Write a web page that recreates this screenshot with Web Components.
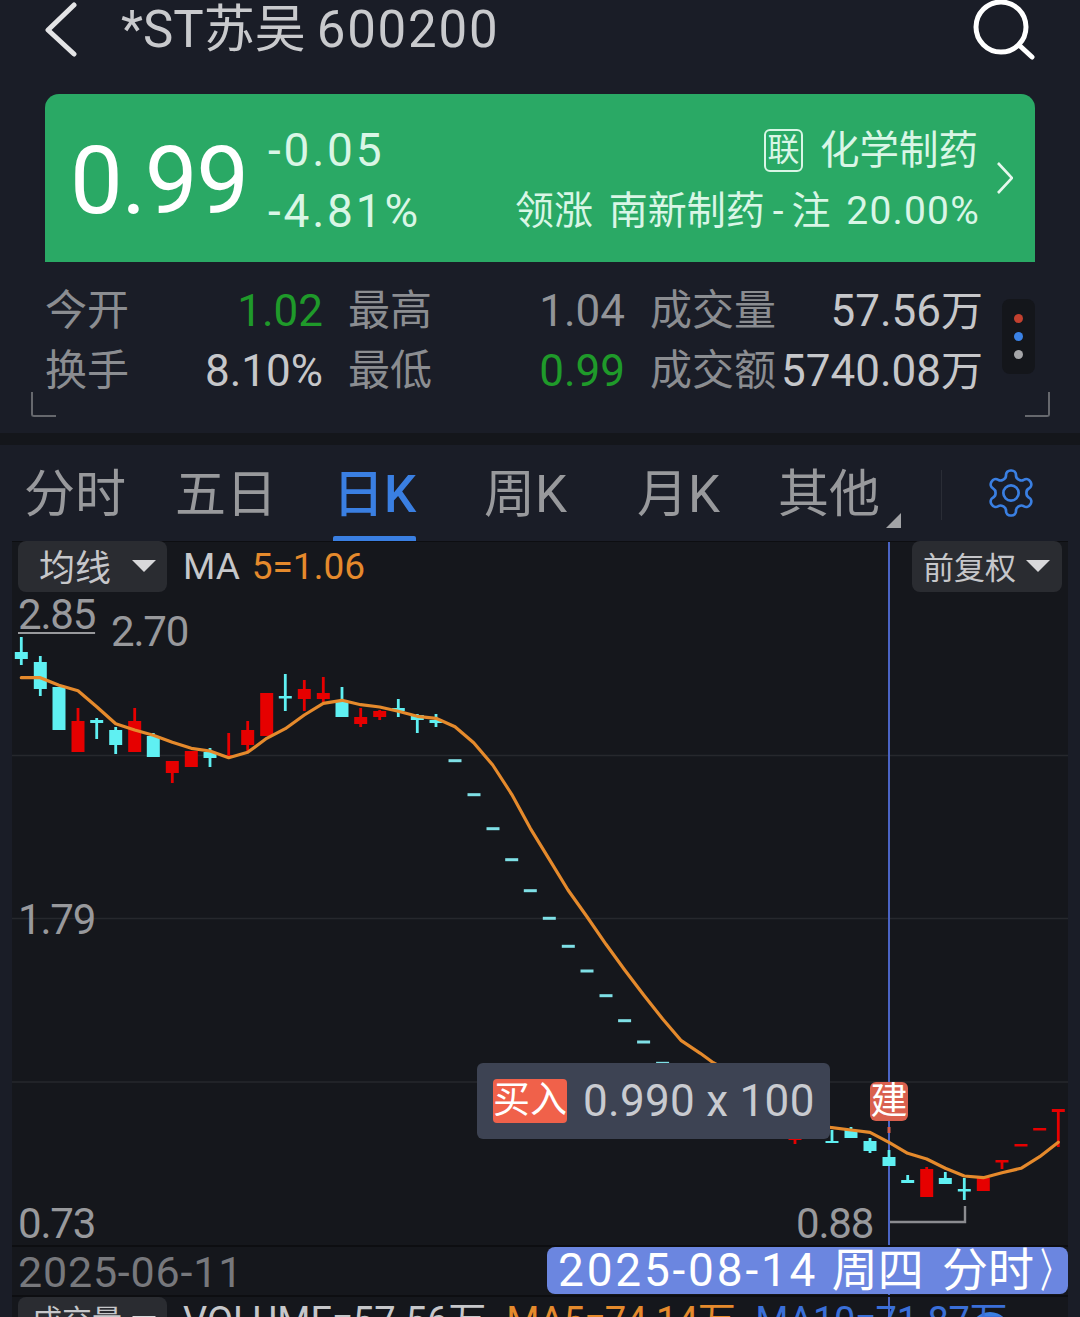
<!DOCTYPE html>
<html lang="zh">
<head>
<meta charset="utf-8">
<title>*ST苏吴 600200</title>
<style>
    html, body {
        margin: 0;
        height: 1317px;
        overflow: hidden;
        background: #1a1d27;
        font-family: Roboto, "Noto Sans CJK SC", sans-serif;
    }
</style>
</head>
<body>
<stock-header></stock-header>
<quote-card></quote-card>
<stat-grid></stat-grid>
<period-tabs></period-tabs>
<kline-chart></kline-chart>

<script>
class StockHeader extends HTMLElement {
    constructor() {
        super();
        this.shadow = this.attachShadow({ mode: "open" });
        this.shadow.innerHTML = `
            <style>
                :host { display: flex; height: 94px; box-sizing: border-box; padding: 0 45px; align-items: flex-start; }
                .back { width: 32px; height: 58px; flex: none; }
                .title {
                    flex: 1;
                    margin-left: 44px;
                    height: 60px;
                    line-height: 60px;
                    font-size: 51px;
                    color: #c9cacd;
                    white-space: nowrap;
                }
                .code { letter-spacing: 1.8px; margin-left: 11px; }
                .search { width: 62px; height: 60px; flex: none; }
            </style>
            <svg class="back" viewBox="0 0 32 58">
                <polyline points="29,5 3,30 29,54" fill="none" stroke="#e4e4e6" stroke-width="5" stroke-linecap="round" stroke-linejoin="round"/>
            </svg>
            <div class="title">*ST苏吴<span class="code">600200</span></div>
            <svg class="search" viewBox="0 0 62 60">
                <circle cx="28" cy="27" r="25" fill="none" stroke="#fff" stroke-width="5"/>
                <line x1="46" y1="45" x2="59" y2="57" stroke="#fff" stroke-width="5" stroke-linecap="round"/>
            </svg>
        `;
    }
}

class QuoteCard extends HTMLElement {
    constructor() {
        super();
        this.shadow = this.attachShadow({ mode: "open" });
        this.shadow.innerHTML = `
            <style>
                :host {
                    display: flex;
                    height: 168px;
                    margin: 0 45px;
                    box-sizing: border-box;
                    padding: 5px 0 0 25px;
                    background: #2aa965;
                    border-radius: 14px 14px 0 0;
                    align-items: center;
                    color: #d9f6e6;
                }
                .price { font-size: 94px; line-height: 1; color: #fff; width: 198px; flex: none; letter-spacing: -1.4px; }
                .diff { display: flex; flex-direction: column; font-size: 46px; line-height: 61px; letter-spacing: 2.8px; width: 230px; flex: none; }
                .right { flex: 1; display: flex; flex-direction: column; align-items: flex-end; line-height: 61px; font-size: 39px; white-space: nowrap; }
                .sector { display: flex; align-items: center; font-size: 39.5px; margin-right: 2px; }
                .tag {
                    width: 39px;
                    height: 43px;
                    box-sizing: border-box;
                    border: 2px solid #d9f6e6;
                    border-radius: 6px;
                    font-size: 32px;
                    line-height: 39px;
                    text-align: center;
                    margin-right: 17px;
                }
                .lead { word-spacing: 6px; }
                .lead .h { letter-spacing: 8px; margin-left: 8px; }
                .lead .n { letter-spacing: 1.2px; }
                .chev { width: 16px; height: 32px; margin: -5px 22px 0 17px; flex: none; }
            </style>
            <div class="price">0.99</div>
            <div class="diff"><span>-0.05</span><span>-4.81%</span></div>
            <div class="right">
                <div class="sector"><span class="tag">联</span>化学制药</div>
                <div class="lead">领涨 南新制药<span class="h">-</span>注 <span class="n">20.00%</span></div>
            </div>
            <svg class="chev" viewBox="0 0 16 32">
                <polyline points="1,1 15,16 1,31" fill="none" stroke="#e6f8ee" stroke-width="2.6"/>
            </svg>
        `;
    }
}

class StatGrid extends HTMLElement {
    constructor() {
        super();
        this.shadow = this.attachShadow({ mode: "open" });
        this.shadow.innerHTML = `
            <style>
                :host {
                    display: block;
                    position: relative;
                    height: 171px;
                    box-sizing: border-box;
                    padding: 19px 0 0 45px;
                    font-size: 42px;
                    color: #c6c7ca;
                }
                .grid {
                    display: grid;
                    grid-template-columns: 120px 158px 25px 82px 195px 25px 124px 209px;
                    grid-auto-rows: 60px;
                    line-height: 60px;
                    white-space: nowrap;
                }
                .lb { color: #8b8d91; }
                .val { text-align: right; font-size: 44px; }
                .green { color: #1f9a2a; }
                .dim { color: #929498; }
                .wan { font-size: 42px; }
                .dots {
                    position: absolute;
                    left: 1002px;
                    top: 37px;
                    width: 33px;
                    height: 75px;
                    background: #14161b;
                    border-radius: 8px;
                    display: flex;
                    flex-direction: column;
                    align-items: center;
                    justify-content: center;
                    gap: 9px;
                }
                .dots i { width: 9px; height: 9px; border-radius: 50%; }
                .corner { position: absolute; top: 130px; width: 25px; height: 25px; box-sizing: border-box; border-bottom: 2px solid #66686d; }
                .corner.l { left: 31px; border-left: 2px solid #66686d; border-bottom-left-radius: 3px; }
                .corner.r { left: 1025px; border-right: 2px solid #66686d; border-bottom-right-radius: 3px; }
            </style>
            <div class="grid">
                <span class="lb">今开</span><span class="val green">1.02</span><span></span>
                <span class="lb">最高</span><span class="val dim">1.04</span><span></span>
                <span class="lb">成交量</span><span class="val">57.56<span class="wan">万</span></span>
                <span class="lb">换手</span><span class="val">8.10%</span><span></span>
                <span class="lb">最低</span><span class="val green">0.99</span><span></span>
                <span class="lb">成交额</span><span class="val">5740.08<span class="wan">万</span></span>
            </div>
            <div class="dots">
                <i style="background:#c2402f"></i>
                <i style="background:#3b82e6"></i>
                <i style="background:#a5a6a9"></i>
            </div>
            <div class="corner l"></div>
            <div class="corner r"></div>
        `;
    }
}

class PeriodTabs extends HTMLElement {
    constructor() {
        super();
        this.shadow = this.attachShadow({ mode: "open" });
        this.shadow.innerHTML = `
            <style>
                :host {
                    display: flex;
                    position: relative;
                    height: 108px;
                    box-sizing: border-box;
                    border-top: 12px solid #14161b;
                    padding-left: 24px;
                    font-size: 51px;
                    color: #98999c;
                    align-items: stretch;
                    white-space: nowrap;
                }
                .tab { line-height: 100px; position: relative; }
                .on { color: #3a7fe2; font-weight: 500; }
                .on::after {
                    content: "";
                    position: absolute;
                    left: 0;
                    right: 1px;
                    bottom: 0;
                    height: 5px;
                    background: #3a7fe2;
                    border-radius: 2px 2px 0 0;
                }
                .more { position: absolute; left: 886px; top: 68px; width: 15px; height: 15px; }
                .sep { position: absolute; left: 941px; top: 25px; width: 1px; height: 50px; background: #2a2d36; }
                .gear { position: absolute; left: 984px; top: 21px; width: 54px; height: 54px; }
            </style>
            <div class="tab" style="width:151px">分时</div>
            <div class="tab" style="width:158px">五日</div>
            <div class="tab on" style="width:84px;margin-right:67px">日K</div>
            <div class="tab" style="width:153px">周K</div>
            <div class="tab" style="width:141px">月K</div>
            <div class="tab">其他</div>
            <svg class="more" viewBox="0 0 15 15"><polygon points="15,0 15,15 0,15" fill="#a2a3a6"/></svg>
            <div class="sep"></div>
            <svg class="gear" viewBox="0 0 24 24" fill="none" stroke="#3a7fe2" stroke-width="1.2" stroke-linejoin="round">
                <path d="M12.22 2h-.44a2 2 0 0 0-2 2v.18a2 2 0 0 1-1 1.73l-.43.25a2 2 0 0 1-2 0l-.15-.08a2 2 0 0 0-2.73.73l-.22.38a2 2 0 0 0 .73 2.73l.15.1a2 2 0 0 1 1 1.72v.51a2 2 0 0 1-1 1.74l-.15.09a2 2 0 0 0-.73 2.73l.22.38a2 2 0 0 0 2.73.73l.15-.08a2 2 0 0 1 2 0l.43.25a2 2 0 0 1 1 1.73V20a2 2 0 0 0 2 2h.44a2 2 0 0 0 2-2v-.18a2 2 0 0 1 1-1.73l.43-.25a2 2 0 0 1 2 0l.15.08a2 2 0 0 0 2.73-.73l.22-.39a2 2 0 0 0-.73-2.73l-.15-.08a2 2 0 0 1-1-1.74v-.5a2 2 0 0 1 1-1.74l.15-.09a2 2 0 0 0 .73-2.73l-.22-.38a2 2 0 0 0-2.73-.73l-.15.08a2 2 0 0 1-2 0l-.43-.25a2 2 0 0 1-1-1.73V4a2 2 0 0 0-2-2z"/>
                <circle cx="12" cy="12" r="3.4"/>
            </svg>
        `;
    }
}

class ChipSelect extends HTMLElement {
    constructor() {
        super();
        this.shadow = this.attachShadow({ mode: "open" });
        this.shadow.innerHTML = `
            <style>
                :host {
                    display: flex;
                    box-sizing: border-box;
                    height: 51px;
                    padding-bottom: 3px;
                    align-items: center;
                    background: #2a2c31;
                    border-radius: 8px;
                    color: #c6c7ca;
                    white-space: nowrap;
                }
                i {
                    display: block;
                    width: 0;
                    height: 0;
                    margin-top: 2px;
                    border-left: 12px solid transparent;
                    border-right: 12px solid transparent;
                    border-top: 12px solid #d8d8da;
                }
            </style>
            <slot></slot><i></i>
        `;
    }
}

// x centre, wick top, wick bottom, body top, body bottom
const UP = "#e60000", DOWN = "#5ff0f2", THIN = "#7fe0e6";
const CANDLES = [
    [21.3, 637, 665, 652, 659, DOWN], [40.3, 656, 696, 662, 689, DOWN], [59, 687, 730, 687, 730, DOWN],
    [78, 708, 752, 721, 752, UP], [96.7, 718, 739, 720, 723, DOWN], [115.7, 727, 754, 730, 745, DOWN],
    [134.7, 708, 752, 721, 752, UP], [153.3, 733, 757, 736, 757, DOWN], [172.3, 761, 783, 761, 773, UP],
    [191.3, 751, 767, 751, 767, UP], [210, 748, 767, 752, 758, DOWN], [228.7, 733, 757, 755, 757, UP],
    [247.7, 721, 751, 730, 745, UP], [266.7, 693, 736, 693, 736, UP], [285.3, 674, 711, 696, 698.5, DOWN],
    [304.3, 680, 711, 689, 699, UP], [323.3, 677, 702, 693, 699, UP], [342, 687, 717, 702, 717, DOWN],
    [360.7, 708, 727, 717, 724, UP], [379.7, 710, 720, 711, 717, UP], [398.3, 699, 717, 708, 711, DOWN],
    [417.3, 714, 733, 715, 720, DOWN], [436, 714, 727, 720, 723, DOWN],
    [795, 1130, 1144, 1137, 1140, UP], [832, 1130, 1143, 1141, 1143, DOWN], [851, 1127, 1138, 1130, 1138, DOWN],
    [870, 1138, 1153, 1141, 1151, DOWN], [889, 1150, 1166, 1157, 1166, DOWN], [907.7, 1175, 1183, 1180, 1183, DOWN],
    [926.7, 1167, 1197, 1169, 1197, UP], [945.3, 1172, 1184, 1178, 1184, DOWN], [964.3, 1178, 1200, 1189, 1191.5, DOWN],
    [983.3, 1178, 1191, 1178, 1191, UP], [1002, 1160, 1169, 1160, 1162.5, UP], [1021, 1144, 1146, 1144, 1146.5, UP],
    [1039.7, 1128, 1130, 1128, 1130.5, UP], [1058.3, 1109, 1147, 1109, 1112, UP]
];
const DASHES = [
    [455, 760.7], [474, 794.7], [493, 828.7], [511.7, 859.7], [530.3, 890.7], [549.3, 918.3],
    [568.3, 946.3], [587, 971], [606, 995.7], [624.6, 1020.7], [643.6, 1042], [662.6, 1063.3]
];
const MA5 = [
    [21.3, 677.7], [40.3, 677.7], [59, 685.3], [78, 690.7], [96.7, 706.7], [115.7, 723.7], [134.7, 730], [153.3, 735.3],
    [172.3, 742.3], [191.3, 748.3], [210, 751], [228.7, 757.7], [247.7, 752.3], [266.7, 738.3], [285.3, 728.7], [304.3, 715],
    [323.3, 703.3], [342, 700.3], [360.7, 704.7], [379.7, 707], [398.3, 711.3], [417.3, 716.3], [436, 718.3], [455, 726.7],
    [473.7, 742.7], [492.7, 765], [511.7, 794.3], [530.3, 828.3], [549.3, 859.3], [568, 890], [587, 916.7], [606, 944.3],
    [624.7, 970], [643.7, 995], [662.7, 1019], [681.3, 1040.7], [700.3, 1053.3], [713.3, 1062.7], [830, 1127.3], [851, 1130],
    [870, 1132.3], [889, 1142.3], [907.7, 1153.3], [926.7, 1159], [945.3, 1168.3], [964.3, 1176], [983.3, 1177.7],
    [1002, 1172.7], [1021, 1168.3], [1039.7, 1156.7], [1058.3, 1142.3]
];

class ChartLabel extends HTMLElement {
    constructor() {
        super();
        this.shadow = this.attachShadow({ mode: "open" });
        this.shadow.innerHTML = `
            <style>
                :host {
                    position: absolute;
                    font-size: 42px;
                    letter-spacing: -1.2px;
                    line-height: 50px;
                    color: #98999c;
                    white-space: nowrap;
                }
            </style>
            <slot></slot>
        `;
    }
}

class KlineChart extends HTMLElement {
    constructor() {
        super();
        this.shadow = this.attachShadow({ mode: "open" });
        this.shadow.innerHTML = `
            <style>
                :host { display: block; height: 776px; padding: 0 12px; overflow: hidden; }
                .plot { position: relative; height: 776px; background: #15171c; }
                svg.canvas { position: absolute; left: 0; top: 0; width: 1056px; height: 776px; }
                .tools { position: relative; display: flex; justify-content: space-between; padding: 0 6px; height: 704px; box-sizing: border-box; border-top: 1px solid #0d0e11; font-size: 37px; }
                .left { display: flex; align-items: flex-start; }
                .ma { line-height: 50px; margin-left: 16px; color: #c6c7ca; white-space: nowrap; }
                .ma span { color: #e58a2c; margin-left: 12px; }
                chip-select.ma-chip { width: 149px; padding-left: 21px; gap: 21px; font-size: 36px; margin-top: -1px; }
                chip-select.fq { width: 150px; padding-left: 11px; gap: 10px; font-size: 31px; margin-top: -1px; }
                .dates {
                    position: relative;
                    display: flex;
                    justify-content: space-between;
                    height: 52px;
                    box-sizing: border-box;
                    border-top: 2px solid #0d0e11;
                    border-bottom: 2px solid #0d0e11;
                    padding-left: 6px;
                    color: #77787c;
                    font-size: 43px;
                    letter-spacing: .8px;
                    line-height: 50px;
                    white-space: nowrap;
                }
                .now {
                    width: 521px;
                    height: 47px;
                    box-sizing: border-box;
                    padding-left: 11px;
                    background: #6b86e0;
                    border-radius: 8px;
                    color: #fff;
                    font-size: 46px;
                    letter-spacing: 0;
                    word-spacing: 2px;
                    line-height: 47px;
                }
                .now .d { letter-spacing: 2.8px; }
                .now .t { margin-left: 5px; }
                .now .c { display: inline-block; transform: scaleX(.6); transform-origin: left center; margin-left: 6px; }
                .vol { position: relative; display: flex; align-items: flex-start; padding-left: 6px; font-size: 38px; line-height: 50px; white-space: nowrap; color: #c6c7ca; height: 40px; margin-top: -1px; }
                chip-select.vol-chip { width: 149px; padding-left: 14px; gap: 10px; font-size: 30px; margin: 1px 16px 0 0; }
                .vol b { font-weight: 400; color: #e58a2c; margin-left: 20px; letter-spacing: -.5px; }
                .vol u { text-decoration: none; color: #3a6fd8; margin-left: 20px; letter-spacing: -.3px; }
                .tip {
                    position: absolute;
                    left: 465px;
                    top: 522px;
                    width: 353px;
                    height: 76px;
                    box-sizing: border-box;
                    padding-left: 16px;
                    display: flex;
                    align-items: center;
                    background: #3d4353;
                    border-radius: 6px;
                    color: #c9cbd0;
                    font-size: 44px;
                    letter-spacing: .3px;
                    white-space: nowrap;
                }
                .buy {
                    width: 74px;
                    height: 44px;
                    background: #f0614a;
                    border-radius: 4px;
                    color: #fff;
                    font-size: 37px;
                    line-height: 44px;
                    letter-spacing: 0;
                    text-align: center;
                    margin-right: 16px;
                }
                .jian {
                    position: absolute;
                    left: 858px;
                    top: 541px;
                    width: 38px;
                    height: 39px;
                    background: #d9604e;
                    border-radius: 6px;
                    color: #fff;
                    font-size: 37px;
                    line-height: 39px;
                    text-align: center;
                }
            </style>
            <div class="plot">
                <svg class="canvas" viewBox="12 541 1056 776"></svg>
                <div class="tools">
                    <div class="left">
                        <chip-select class="ma-chip">均线</chip-select>
                        <div class="ma">MA<span>5=1.06</span></div>
                    </div>
                    <chip-select class="fq">前复权</chip-select>
                </div>
                <chart-label style="left:6px;top:49px"><span style="text-decoration:underline;text-underline-offset:3px;text-decoration-thickness:2px">2.85</span></chart-label>
                <chart-label style="left:99px;top:66px">2.70</chart-label>
                <chart-label style="left:6px;top:354px">1.79</chart-label>
                <chart-label style="left:6px;top:658px">0.73</chart-label>
                <chart-label style="left:784px;top:658px">0.88</chart-label>
                <div class="tip"><div class="buy">买入</div>0.990 x 100</div>
                <div class="jian">建</div>
                <div class="dates">
                    <span>2025-06-11</span>
                    <div class="now"><span class="d">2025-08-14</span> 周四 <span class="t">分时</span><span class="c">〉</span></div>
                </div>
                <div class="vol">
                    <chip-select class="vol-chip">成交量</chip-select>
                    <span>VOLUME=57.56万</span>
                    <b>MA5=74.14万</b>
                    <u>MA10=71.87万</u>
                </div>
            </div>
        `;
    }

    connectedCallback() {
        const svg = this.shadow.querySelector("svg.canvas");
        let html = "";

        [755.5, 918.5, 1082].forEach(y => {
            html += `<line x1="12" x2="1068" y1="${y}" y2="${y}" stroke="#26282d" stroke-width="1.5"/>`;
        });
        html += `<line x1="889" x2="889" y1="541" y2="1317" stroke="#4a64c4" stroke-width="2"/>`;
        html += `<rect x="887.5" y="1127" width="3" height="6" fill="#d9604e"/>`;

        CANDLES.forEach(c => {
            html += `<rect x="${c[0] - 1.4}" y="${c[1]}" width="2.8" height="${c[2] - c[1]}" fill="${c[5]}"/>`;
            html += `<rect x="${c[0] - 6.5}" y="${c[3]}" width="13" height="${c[4] - c[3]}" fill="${c[5]}"/>`;
        });
        DASHES.forEach(d => {
            html += `<rect x="${d[0] - 6.5}" y="${d[1] - 1.5}" width="13" height="3" fill="${THIN}"/>`;
        });

        html += `<polyline points="${MA5.map(p => p.join(",")).join(" ")}" fill="none" stroke="#e58a2c" stroke-width="3.2" stroke-linejoin="round" stroke-linecap="round"/>`;
        html += `<polyline points="890,1222 965,1222 965,1206" fill="none" stroke="#8b8c90" stroke-width="2.4"/>`;
        html += `<circle cx="990" cy="1332" r="20" fill="#3a7fe2"/>`;
        svg.innerHTML = html;
    }
}

customElements.define("chip-select", ChipSelect);
customElements.define("chart-label", ChartLabel);
customElements.define("stock-header", StockHeader);
customElements.define("quote-card", QuoteCard);
customElements.define("stat-grid", StatGrid);
customElements.define("period-tabs", PeriodTabs);
customElements.define("kline-chart", KlineChart);
</script>
</body>
</html>
